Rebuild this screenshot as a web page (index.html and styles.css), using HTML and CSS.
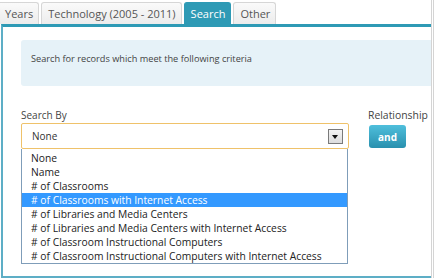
FILE: index.html
```html
<!DOCTYPE html>
<html lang="en">
<head>
    <meta charset="UTF-8">
    <title>Search</title>
    <link rel="stylesheet" href="styles.css">
</head>
<body>
    <div class="frame">
        <div class="tabs">
            <div class="tab first">Years</div>
            <div class="tab">Technology (2005 - 2011)</div>
            <div class="tab active">Search</div>
            <div class="tab">Other</div>
        </div>

        <div class="panel">
            <div class="info">Search for records which meet the following criteria</div>

            <div class="criteria">
                <div class="field">
                    <label class="label">Search By</label>
                    <div class="select">
                        <span>None</span>
                        <span class="arrow"></span>
                    </div>
                    <ul class="options">
                        <li>None</li>
                        <li>Name</li>
                        <li># of Classrooms</li>
                        <li class="selected"># of Classrooms with Internet Access</li>
                        <li># of Libraries and Media Centers</li>
                        <li># of Libraries and Media Centers with Internet Access</li>
                        <li># of Classroom Instructional Computers</li>
                        <li># of Classroom Instructional Computers with Internet Access</li>
                    </ul>
                </div>
                <div class="field relation">
                    <label class="label">Relationship</label>
                    <button class="btn">and</button>
                </div>
            </div>
        </div>
    </div>
</body>
</html>
```

FILE: styles.css
```css
* {
    box-sizing: border-box;
    margin: 0;
    padding: 0;
}

body {
    font-family: 'Open Sans', sans-serif;
    background: #fff;
    color: #333;
}

.frame {
    width: 434px;
    height: 278px;
    border-right: 3px double #d4d4d4;
    display: flex;
    flex-direction: column;
}

.tabs {
    display: flex;
    gap: 2px;
    padding-top: 2px;
    height: 24px;
}

.tab {
    height: 22px;
    padding: 0 5px 0 6px;
    font-size: 11px;
    line-height: 21px;
    color: #555;
    background: linear-gradient(#fafafa, #ececec);
    border: 1px solid #d6d6d6;
    border-bottom: none;
    border-radius: 3px 3px 0 0;
}

.tab.first {
    border-left: none;
    padding-left: 5px;
    border-radius: 0 3px 0 0;
}

.tab.active {
    background: #2e9ab5;
    border-color: #2e9ab5;
    color: #fff;
}

.panel {
    flex: 1;
    border-top: 3px solid #2e9ab5;
    border-left: 2px solid #5daec6;
    border-bottom: 2px solid #5daec6;
    margin-left: 1px;
    padding: 13px 0 0 18px;
}

.info {
    background: #e6f2f8;
    border-radius: 3px 0 0 3px;
    height: 46px;
    padding: 13px 10px 0;
    font-size: 9.2px;
    line-height: 12px;
    color: #444;
}

.criteria {
    display: flex;
    gap: 20px;
    margin-top: 23px;
}

.field {
    display: flex;
    flex-direction: column;
}

.label {
    font-size: 10px;
    color: #444;
    height: 14px;
    line-height: 12px;
}

.relation .label {
    font-size: 10.4px;
    margin-left: -1px;
}

.select {
    width: 328px;
    height: 26px;
    border: 1px solid #efc26a;
    border-radius: 2px;
    display: flex;
    align-items: center;
    justify-content: space-between;
    padding: 0 5px 0 10px;
    font-size: 10px;
    color: #333;
}

.arrow {
    width: 15px;
    height: 15px;
    border: 1px solid #7a7a7a;
    background: #e8e8e8 linear-gradient(#f4f4f4, #dcdcdc);
    position: relative;
}

.arrow::after {
    content: '';
    position: absolute;
    left: 3px;
    top: 5px;
    border-left: 3.5px solid transparent;
    border-right: 3.5px solid transparent;
    border-top: 4px solid #111;
}

.options {
    list-style: none;
    width: 327px;
    border: 1px solid #7f9db9;
    border-top: none;
    padding: 2px 0 0;
}

.options li {
    font-size: 10.3px;
    height: 14px;
    line-height: 14px;
    padding-left: 9px;
    color: #222;
    white-space: nowrap;
}

.options li.selected {
    background: #3399ff;
    color: #fff;
}

.btn {
    margin-top: 2px;
    width: 37px;
    height: 23px;
    border: none;
    border-radius: 3px;
    background: linear-gradient(#4fbfdc, #2990ae);
    color: #fff;
    font-family: 'Open Sans', sans-serif;
    font-weight: bold;
    font-size: 10px;
}
```
